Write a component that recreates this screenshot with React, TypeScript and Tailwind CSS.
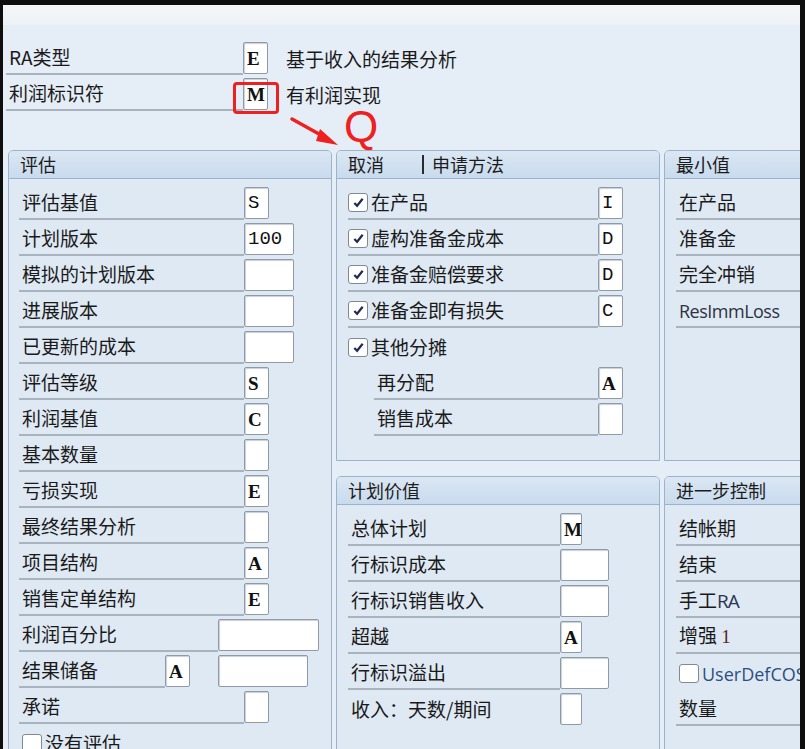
import type { ReactNode } from "react";

const cjk = "font-['Noto_Sans_CJK_SC','Noto_Sans',sans-serif]";

type Val = { text?: string; serif?: boolean; w: string };

function Box({ v }: { v: Val }) {
  return (
    <div
      className={`h-[32px] shrink-0 ${v.w} flex items-center rounded-[2px] border border-[#8e9aa7] bg-white px-[3px] shadow-[inset_1px_1px_1px_#c9d0d8] text-[19px] leading-none text-[#111] ${
        v.serif
          ? "font-['Liberation_Serif',serif] font-bold"
          : "font-['Liberation_Mono',monospace]"
      }`}
    >
      {v.text}
    </div>
  );
}

function Check({ on }: { on?: boolean }) {
  return (
    <span className="mr-[3px] flex h-[19px] w-[20px] shrink-0 items-center justify-center rounded-[3px] border border-[#7f8a96] bg-white">
      {on && (
        <svg viewBox="0 0 14 14" className="h-[13px] w-[13px]">
          <path d="M2.5 7.5 L5.5 10.5 L11.5 3" fill="none" stroke="#1f2d55" strokeWidth="2.4" />
        </svg>
      )}
    </span>
  );
}

// one field: label with underline, then an optional value box
function Field({
  label,
  lw,
  boxes = [],
  check,
  line = true,
  after,
}: {
  label: ReactNode;
  lw: string;
  boxes?: Val[];
  check?: "on" | "off";
  line?: boolean;
  after?: ReactNode;
}) {
  return (
    <div className="flex h-[36px] items-start">
      <div
        className={`flex h-[33px] shrink-0 items-center ${lw} ${
          line ? "border-b-2 border-[#a9b3bd]" : ""
        }`}
      >
        {check && <Check on={check === "on"} />}
        <span className={check ? "" : "pl-[3px]"}>{label}</span>
      </div>
      {boxes[0] && <Box v={boxes[0]} />}
      {after}
    </div>
  );
}

function Group({
  title,
  className,
  children,
}: {
  title: ReactNode;
  className: string;
  children: ReactNode;
}) {
  return (
    <div
      className={`flex shrink-0 flex-col overflow-hidden rounded-t-[5px] border border-[#9cb4cb] bg-[#dfe9f4] ${className}`}
    >
      <div className="flex h-[28px] shrink-0 items-center border-b border-[#9cb4cb] bg-gradient-to-b from-[#dbe7f3] to-[#c8dbee] pl-[11px] text-[18px] text-[#1c1c1c]">
        {title}
      </div>
      <div className="flex flex-col pt-[8px]">{children}</div>
    </div>
  );
}

const sm = (text?: string, serif?: boolean): Val => ({ text, serif, w: "w-[25px]" });
const md = (text?: string): Val => ({ text, w: "w-[50px]" });

export default function App() {
  return (
    <div
      className={`h-[749px] w-[805px] overflow-hidden bg-[#0e0e0e] pl-[3px] pr-[5px] pt-[5px] ${cjk} text-[19px] text-[#1a1a1a]`}
    >
      <div className="relative flex h-full flex-col overflow-hidden bg-[#e5edf6]">
        <div className="h-[20px] shrink-0 bg-gradient-to-b from-[#f6f6f6] to-[#eef2f7]" />

        {/* header fields */}
        <div className="flex flex-col pl-[3px] pt-[17px]">
          <div className="flex h-[36px] items-start">
            <div className="flex h-[33px] w-[237px] items-center border-b-2 border-[#a9b3bd] pl-[3px]">
              RA类型
            </div>
            <Box v={sm("E", true)} />
            <span className="ml-[18px] mt-[3px]">基于收入的结果分析</span>
          </div>
          <div className="flex h-[36px] items-start">
            <div className="flex h-[33px] w-[237px] items-center border-b-2 border-[#a9b3bd] pl-[3px]">
              利润标识符
            </div>
            <Box v={sm("M", true)} />
            <span className="ml-[18px] mt-[3px]">有利润实现</span>
          </div>
        </div>

        {/* red note */}
        <div className="absolute left-[230px] top-[77px] h-[32px] w-[46px] rounded-[4px] border-[3px] border-[#ee2020]" />
        <svg className="absolute left-[285px] top-[110px]" width="56" height="34" viewBox="0 0 56 34">
          <path d="M4 4 L40 24" stroke="#ee2020" strokeWidth="3.5" strokeLinecap="round" />
          <path d="M32 14 L50 30 L28 26 Z" fill="#ee2020" />
        </svg>
        <span className="absolute left-[341px] top-[108px] font-['Liberation_Sans',sans-serif] text-[44px] leading-[28px] text-[#ee2020]">
          Q
        </span>

        {/* groups */}
        <div className="mt-[36px] flex flex-1 gap-[4px] pl-[5px]">
          <Group title="评估" className="h-[640px] w-[324px]">
            <div className="flex flex-col pl-[10px]">
              <Field label="评估基值" lw="w-[225px]" boxes={[sm("S")]} />
              <Field label="计划版本" lw="w-[225px]" boxes={[md("100")]} />
              <Field label="模拟的计划版本" lw="w-[225px]" boxes={[md()]} />
              <Field label="进展版本" lw="w-[225px]" boxes={[md()]} />
              <Field label="已更新的成本" lw="w-[225px]" boxes={[md()]} />
              <Field label="评估等级" lw="w-[225px]" boxes={[sm("S", true)]} />
              <Field label="利润基值" lw="w-[225px]" boxes={[sm("C", true)]} />
              <Field label="基本数量" lw="w-[225px]" boxes={[sm()]} />
              <Field label="亏损实现" lw="w-[225px]" boxes={[sm("E", true)]} />
              <Field label="最终结果分析" lw="w-[225px]" boxes={[sm()]} />
              <Field label="项目结构" lw="w-[225px]" boxes={[sm("A", true)]} />
              <Field label="销售定单结构" lw="w-[225px]" boxes={[sm("E", true)]} />
              <Field label="利润百分比" lw="w-[199px]" boxes={[{ w: "w-[101px]" }]} />
              <Field
                label="结果储备"
                lw="w-[146px]"
                boxes={[sm("A", true)]}
                after={
                  <div className="ml-[28px]">
                    <Box v={{ w: "w-[90px]" }} />
                  </div>
                }
              />
              <Field label="承诺" lw="w-[225px]" boxes={[sm()]} />
              <div className="pl-[3px]">
                <Field label="没有评估" lw="w-[222px]" check="off" line={false} />
              </div>
            </div>
          </Group>

          <div className="flex w-[324px] shrink-0 flex-col gap-[15px]">
            <Group
              title={
                <span className="flex items-center">
                  取消
                  <span className="ml-[38px] mr-[8px] h-[19px] w-[2px] bg-[#2a2a2a]" />
                  申请方法
                </span>
              }
              className="h-[311px] w-[324px]"
            >
              <div className="flex flex-col pl-[11px]">
                <Field label="在产品" lw="w-[250px]" check="on" boxes={[sm("I")]} />
                <Field label="虚构准备金成本" lw="w-[250px]" check="on" boxes={[sm("D")]} />
                <Field label="准备金赔偿要求" lw="w-[250px]" check="on" boxes={[sm("D")]} />
                <Field label="准备金即有损失" lw="w-[250px]" check="on" boxes={[sm("C")]} />
                <Field label="其他分摊" lw="w-[250px]" check="on" line={false} />
                <div className="flex flex-col pl-[26px]">
                  <Field label="再分配" lw="w-[224px]" boxes={[sm("A", true)]} />
                  <Field label="销售成本" lw="w-[224px]" boxes={[sm()]} />
                </div>
              </div>
            </Group>
            <Group title="计划价值" className="w-[324px] flex-1">
              <div className="flex flex-col pl-[11px]">
                <Field label="总体计划" lw="w-[212px]" boxes={[{ text: "M", serif: true, w: "w-[22px]" }]} />
                <Field label="行标识成本" lw="w-[212px]" boxes={[{ w: "w-[49px]" }]} />
                <Field label="行标识销售收入" lw="w-[212px]" boxes={[{ w: "w-[49px]" }]} />
                <Field label="超越" lw="w-[212px]" boxes={[{ text: "A", serif: true, w: "w-[22px]" }]} />
                <Field label="行标识溢出" lw="w-[212px]" boxes={[{ w: "w-[49px]" }]} />
                <Field label="收入：天数/期间" lw="w-[212px]" line={false} boxes={[{ w: "w-[22px]" }]} />
              </div>
            </Group>
          </div>

          <div className="flex w-[160px] shrink-0 flex-col gap-[15px]">
            <Group title="最小值" className="h-[311px] w-[160px]">
              <div className="flex flex-col pl-[11px]">
                <Field label="在产品" lw="w-[150px]" />
                <Field label="准备金" lw="w-[150px]" />
                <Field label="完全冲销" lw="w-[150px]" />
                <Field
                  label={<span className="font-['Open_Sans',sans-serif] text-[18px] tracking-[-0.5px] text-[#2c3340]">ResImmLoss</span>}
                  lw="w-[150px]"
                />
              </div>
            </Group>
            <Group title="进一步控制" className="w-[160px] flex-1">
              <div className="flex flex-col pl-[11px]">
                <Field label="结帐期" lw="w-[150px]" />
                <Field label="结束" lw="w-[150px]" />
                <Field
                  label={
                    <>
                      手工<span className="font-['Open_Sans',sans-serif] tracking-[-1px] text-[#2a3550]">RA</span>
                    </>
                  }
                  lw="w-[150px]"
                />
                <Field
                  label={
                    <>
                      增强 <span className="font-['Liberation_Serif',serif] text-[#5a2525]">1</span>
                    </>
                  }
                  lw="w-[150px]"
                />
                <div className="pl-[3px]">
                  <Field
                    label={<span className="whitespace-nowrap font-['Open_Sans',sans-serif] text-[18px] text-[#2b4f80]">UserDefCOS</span>}
                    lw="w-[147px]"
                    check="off"
                    line={false}
                  />
                </div>
                <Field label="数量" lw="w-[150px]" />
              </div>
            </Group>
          </div>
        </div>
      </div>
    </div>
  );
}
